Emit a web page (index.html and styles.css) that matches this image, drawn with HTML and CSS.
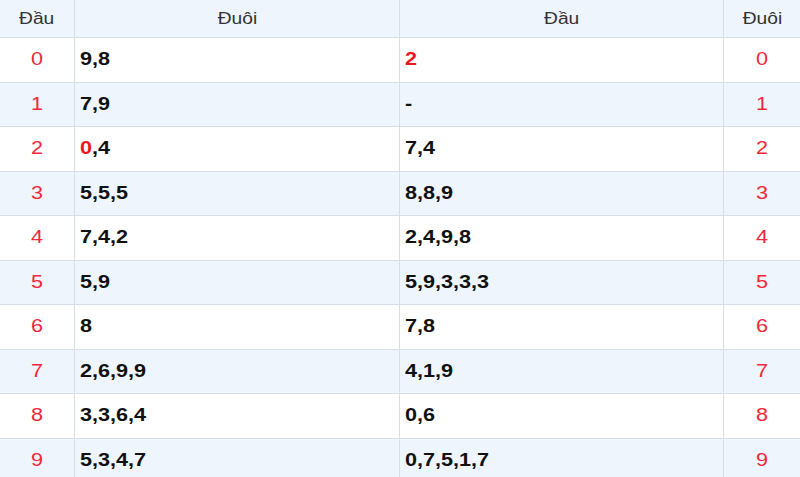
FILE: index.html
```html
<!DOCTYPE html>
<html lang="vi">
<head>
<meta charset="utf-8">
<title>Loto đầu đuôi</title>
<link rel="stylesheet" href="styles.css">
</head>
<body>
<div class="table">
  <div class="row head">
    <div class="cell c"><span class="t">Đầu</span></div>
    <div class="cell c"><span class="t">Đuôi</span></div>
    <div class="cell c"><span class="t">Đầu</span></div>
    <div class="cell c last"><span class="t">Đuôi</span></div>
  </div>
  <div class="row">
    <div class="cell c num"><span class="t">0</span></div>
    <div class="cell val"><span class="t">9,8</span></div>
    <div class="cell val"><span class="t"><span class="hit">2</span></span></div>
    <div class="cell c num last"><span class="t">0</span></div>
  </div>
  <div class="row alt">
    <div class="cell c num"><span class="t">1</span></div>
    <div class="cell val"><span class="t">7,9</span></div>
    <div class="cell val"><span class="t">-</span></div>
    <div class="cell c num last"><span class="t">1</span></div>
  </div>
  <div class="row">
    <div class="cell c num"><span class="t">2</span></div>
    <div class="cell val"><span class="t"><span class="hit">0</span>,4</span></div>
    <div class="cell val"><span class="t">7,4</span></div>
    <div class="cell c num last"><span class="t">2</span></div>
  </div>
  <div class="row alt">
    <div class="cell c num"><span class="t">3</span></div>
    <div class="cell val"><span class="t">5,5,5</span></div>
    <div class="cell val"><span class="t">8,8,9</span></div>
    <div class="cell c num last"><span class="t">3</span></div>
  </div>
  <div class="row">
    <div class="cell c num"><span class="t">4</span></div>
    <div class="cell val"><span class="t">7,4,2</span></div>
    <div class="cell val"><span class="t">2,4,9,8</span></div>
    <div class="cell c num last"><span class="t">4</span></div>
  </div>
  <div class="row alt">
    <div class="cell c num"><span class="t">5</span></div>
    <div class="cell val"><span class="t">5,9</span></div>
    <div class="cell val"><span class="t">5,9,3,3,3</span></div>
    <div class="cell c num last"><span class="t">5</span></div>
  </div>
  <div class="row">
    <div class="cell c num"><span class="t">6</span></div>
    <div class="cell val"><span class="t">8</span></div>
    <div class="cell val"><span class="t">7,8</span></div>
    <div class="cell c num last"><span class="t">6</span></div>
  </div>
  <div class="row alt">
    <div class="cell c num"><span class="t">7</span></div>
    <div class="cell val"><span class="t">2,6,9,9</span></div>
    <div class="cell val"><span class="t">4,1,9</span></div>
    <div class="cell c num last"><span class="t">7</span></div>
  </div>
  <div class="row">
    <div class="cell c num"><span class="t">8</span></div>
    <div class="cell val"><span class="t">3,3,6,4</span></div>
    <div class="cell val"><span class="t">0,6</span></div>
    <div class="cell c num last"><span class="t">8</span></div>
  </div>
  <div class="row alt">
    <div class="cell c num"><span class="t">9</span></div>
    <div class="cell val"><span class="t">5,3,4,7</span></div>
    <div class="cell val"><span class="t">0,7,5,1,7</span></div>
    <div class="cell c num last"><span class="t">9</span></div>
  </div>
</div>
</body>
</html>
```
FILE: styles.css
```css
html, body {
  margin: 0;
  padding: 0;
  background: #ffffff;
}
body {
  font-family: "Liberation Sans", Arial, sans-serif;
  overflow: hidden;
}
.table {
  width: 800px;
}
.row {
  display: grid;
  grid-template-columns: 75px 325px 324px 76px;
  height: 44.5px;
  box-sizing: border-box;
  border-bottom: 1px solid #d8dee5;
  background: #ffffff;
}
.row.alt {
  background: #eef5fd;
}
.row.head {
  height: 38px;
  background: #eef5fd;
}
.cell {
  display: flex;
  align-items: center;
  box-sizing: border-box;
  border-right: 1px solid #d8dee5;
  min-width: 0;
}
.cell.last {
  border-right: none;
}
.cell.c {
  justify-content: center;
}
.t {
  display: inline-block;
  transform: scaleX(1.2);
  transform-origin: center center;
  white-space: nowrap;
}
.val .t {
  transform-origin: left center;
}
.head .cell {
  font-size: 16px;
  color: #333333;
}
.num {
  font-size: 18px;
  color: #f0283a;
}
.val {
  padding-left: 5px;
  font-size: 18px;
  font-weight: bold;
  color: #111111;
}
.hit {
  color: #ee1520;
}
```
